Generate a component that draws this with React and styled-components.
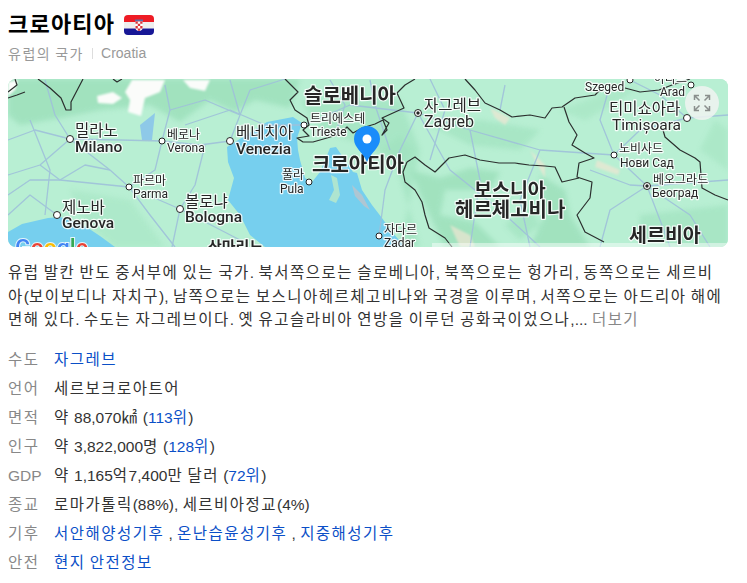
import React from "react";
import styled, { createGlobalStyle } from "styled-components";

const Global = createGlobalStyle`
  html, body { margin: 0; padding: 0; background: #fff; }
  body { font-family: "Liberation Sans", "Noto Sans CJK KR", sans-serif; }
`;

const Page = styled.main`
  width: 720px;
  padding: 11px 0 0 8px;
`;
const TitleRow = styled.div`
  display: flex;
  align-items: center;
  gap: 9px;
  height: 28px;
`;
const Title = styled.h1`
  margin: 0;
  font-size: 22px;
  line-height: 28px;
  font-weight: 700;
  letter-spacing: 1.2px;
  color: #000;
`;
const Ko = styled.span`
  letter-spacing: 0.095em;
`;
const Sub = styled.div`
  display: flex;
  align-items: center;
  height: 20px;
  margin-top: 4px;
  font-size: 14px;
  color: #999;
  ${Ko} {
    letter-spacing: 1.55px;
  }
`;
const Sep = styled.span`
  width: 1px;
  height: 11px;
  margin: 0 8px;
  background: #ddd;
`;
const MapFrame = styled.div`
  position: relative;
  width: 720px;
  height: 168px;
  margin-top: 16px;
  border-radius: 8px;
  overflow: hidden;
  background: #b6edd0;
`;
const MapSvg = styled.svg`
  display: block;
  width: 720px;
  height: 168px;
  filter: blur(0.4px);
`;
const MapLabel = styled.text`
  font-family: Roboto, "Noto Sans CJK KR", sans-serif;
  font-size: ${(p) => p.$size}px;
  font-weight: ${(p) => p.$weight};
  fill: #262626;
  stroke: rgba(255, 255, 255, 0.85);
  stroke-width: 2.4px;
  paint-order: stroke;
  stroke-linejoin: round;
`;
const GoogleMark = styled.text`
  font-family: Roboto, sans-serif;
  font-size: 23px;
  font-weight: 500;
  stroke: rgba(255, 255, 255, 0.8);
  stroke-width: 2px;
  paint-order: stroke;
`;
const ExpandButton = styled.button`
  position: absolute;
  top: 7px;
  right: 9px;
  width: 34px;
  height: 34px;
  padding: 0;
  border: 0;
  border-radius: 50%;
  display: flex;
  align-items: center;
  justify-content: center;
  background: rgba(240, 243, 241, 0.85);
`;
const Description = styled.p`
  margin: 14px 0 0;
  font-size: 15.5px;
  line-height: 23.5px;
  color: #333;
  word-break: break-all;
`;
const More = styled.span`
  color: #888;
`;
const InfoList = styled.dl`
  margin: 13px 0 0;
  display: grid;
  grid-template-columns: 46px 1fr;
  grid-auto-rows: 29px;
  font-size: 15.5px;
  line-height: 29px;
`;
const Term = styled.dt`
  color: #888;
`;
const Value = styled.dd`
  margin: 0;
  color: #333;
`;
const Link = styled.a`
  color: #0b4fc7;
  text-decoration: none;
`;

const T = ({ children }) =>
  String(children)
    .split(/([\uAC00-\uD7A3\u33A2]+)/)
    .map((part, i) => (i % 2 ? <Ko key={i}>{part}</Ko> : part));

const Flag = () => (
  <svg width="30" height="20" viewBox="0 0 30 20">
    <defs>
      <clipPath id="flagclip"><rect width="30" height="20" rx="4" /></clipPath>
    </defs>
    <g clipPath="url(#flagclip)">
      <rect width="30" height="7" fill="#ee1c25" />
      <rect y="7" width="30" height="6.5" fill="#eeeeee" />
      <rect y="13.5" width="30" height="6.5" fill="#171796" />
      <path d="M11 4.5h8v2h-8z" fill="#5a6fa8" />
      <path d="M11.5 6.5h7v6.5q0 2.5-3.500 3q-3.500-.5-3.500-3z" fill="#fff" />
      <path d="M11.500 6.500h2.300v2.300h-2.300zM16.200 6.500h2.300v2.300h-2.300zM13.800 8.800h2.400v2.300h-2.400zM11.500 11.100h2.300v2.300h-2.300zM16.200 11.100h2.300v2.300h-2.300zM13.800 13.400h2.400v2.300h-2.400z" fill="#d9343c" />
    </g>
  </svg>
);

const poly = (pts) => "M" + pts.map((p) => p.join(" ")).join("L");

const BORDERS = [
  [[8,92],[17,85],[15,79]],
  [[8,98],[17,95],[25,92]],
  [[38,79],[50,88],[61,98],[66,110],[71,110],[71,102],[83,79]],
  [[113,79],[117,82],[122,79]],
  [[285,79],[298,92],[290,100],[295,110],[307,118],[309,125],[303,130],[309,136],[297,138],[303,142],[313,142],[327,138],[340,134],[347,127],[353,133],[362,128],[375,124],[383,120],[387,130],[382,135],[389,123],[382,118],[404,108],[397,93],[405,85],[415,79]],
  [[465,79],[475,90],[485,103],[500,110],[512,117],[530,115],[545,118],[552,108],[562,107],[575,98],[595,95],[600,90]],
  [[564,107],[569,122],[577,135],[572,145],[585,153],[594,158],[579,163],[577,177],[592,182],[590,198],[577,215],[585,232],[604,242]],
  [[407,162],[403,172],[405,182],[415,190],[422,202],[425,215],[429,228],[445,238],[452,247]],
  [[407,162],[415,157],[425,165],[435,172],[442,165],[449,158],[465,155],[480,160],[499,163],[515,163],[529,165],[545,166],[555,167],[562,182],[579,178]],
  [[625,88],[640,92],[659,90],[672,85],[690,79]],
  [[663,130],[665,137],[680,150],[695,158],[700,162],[702,188],[715,195],[728,200]],
];

const ROADS = [
  [[8,140],[35,130],[70,139],[120,140],[162,141],[200,145],[230,141]],
  [[8,175],[40,165],[70,139],[55,115],[45,80]],
  [[40,165],[60,180],[129,187],[180,209],[240,240]],
  [[30,120],[50,170],[45,215]],
  [[70,139],[110,170],[129,187],[150,215],[175,247]],
  [[8,195],[30,180],[60,180],[85,165],[110,170]],
  [[162,141],[155,170],[129,187]],
  [[205,145],[195,185],[180,209],[172,247]],
  [[165,85],[170,110],[162,141]],
  [[230,141],[240,115],[230,80]],
  [[185,125],[230,110],[265,125],[304,125]],
  [[240,115],[250,90],[285,79]],
  [[170,110],[205,100],[240,115]],
  [[304,125],[350,105],[418,113],[470,130],[540,150],[614,155],[647,186],[728,180]],
  [[330,80],[345,105],[335,135]],
  [[370,80],[375,105],[390,150]],
  [[418,113],[400,150],[385,190],[379,236]],
  [[418,113],[450,170],[500,210],[540,247]],
  [[470,130],[480,180],[470,247]],
  [[540,150],[520,200],[530,247]],
  [[614,155],[600,120],[610,85]],
  [[614,155],[640,130],[687,118],[728,115]],
  [[647,186],[660,220],[670,247]],
  [[647,186],[610,210],[600,247]],
  [[647,186],[690,215],[710,247]],
  [[687,118],[660,95],[630,80]],
  [[430,79],[445,110],[430,160]],
  [[500,110],[505,85]],
  [[8,215],[30,195],[57,215]],
  [[590,170],[630,185],[647,186]],
];

const LABELS = [
  ["슬로베니아", 304, 103, 20, 700],
  ["크로아티아", 312, 172, 20, 700],
  ["트리에스테", 310, 123, 12, 400],
  ["Trieste", 310, 136, 12, 400],
  ["밀라노", 75, 136, 15.5, 400],
  ["Milano", 75, 152, 15.5, 500],
  ["베로나", 167, 139, 12, 400],
  ["Verona", 167, 152, 12, 400],
  ["베네치아", 236, 138, 15.5, 400],
  ["Venezia", 236, 154, 15.5, 500],
  ["파르마", 133, 185, 12, 400],
  ["Parma", 133, 198, 12, 400],
  ["볼로냐", 185, 207, 15.5, 400],
  ["Bologna", 185, 222, 15.5, 500],
  ["제노바", 62, 213, 15.5, 400],
  ["Genova", 62, 228, 15.5, 500],
  ["풀라", 282, 179, 12, 400],
  ["Pula", 280, 193, 12, 400],
  ["산마리노", 208, 252, 15, 700],
  ["자그레브", 424, 111, 15.5, 400],
  ["Zagreb", 424, 127, 16, 400],
  ["자다르", 384, 234, 12, 400],
  ["Zadar", 384, 247, 12, 400],
  ["아라드", 654, 83, 12, 400],
  ["Szeged", 585, 91, 12, 400],
  ["Arad", 660, 96, 12, 400],
  ["티미쇼아라", 609, 114, 15.5, 400],
  ["Timișoara", 612, 130, 15.5, 400],
  ["노비사드", 619, 153, 12, 400],
  ["Нови Сад", 620, 167, 12, 400],
  ["베오그라드", 653, 184, 12, 400],
  ["Београд", 652, 197, 12, 400],
  ["보스니아", 474, 197, 19.5, 700],
  ["헤르체고비나", 455, 217, 20, 700],
  ["세르비아", 629, 242, 19.5, 700],
];

const DOTS = [
  [70,139,3.5],[162,141,3],[230,141,3.5],[129,187,3],[180,209,3.5],[57,215,3.5],
  [309,182,3],[304,125,3],[379,236,3],[630,80,3],[691,85,3],[687,118,3.5],[614,155,3],
];
const CAPITALS = [[418,113],[647,186]];

const MapArt = () => (
  <MapSvg viewBox="8 79 720 168" aria-label="크로아티아 지도">
    <defs>
      <filter id="soft" x="-10%" y="-10%" width="120%" height="120%"><feGaussianBlur stdDeviation="2.5" /></filter>
      <filter id="soft1" x="-10%" y="-10%" width="120%" height="120%"><feGaussianBlur stdDeviation="0.8" /></filter>
    </defs>
    <rect x="8" y="79" width="720" height="168" fill="#b8efd3" />
    <g filter="url(#soft)" fill="#9bdfba" opacity=".8">
      <path d="M8 79H300L290 108L255 100L235 112L210 100L180 122L150 105L100 110L60 118L20 125L8 115Z" />
      <path d="M300 100L400 100L420 150L400 247L420 247L395 160L350 140L320 130Z" opacity=".7" />
      <path d="M410 170L440 178L470 168L500 172L490 190L445 190L440 215L475 222L500 247H445L425 205Z" />
      <path d="M540 175L565 190L570 215L590 247H530L545 215Z" />
      <path d="M505 225L530 205L540 225L520 240Z" opacity=".7" />
      <path d="M430 125L480 120L540 130L520 150L470 145Z" opacity=".7" />
      <path d="M380 150L400 135L415 150L400 170Z" opacity=".6" />
      <path d="M640 215L728 205V247H640Z" opacity=".7" />
      <path d="M715 120L728 130V170L700 150Z" opacity=".5" />
      <path d="M70 190L130 200L165 247H115L85 222Z" opacity=".45" />
      <path d="M560 110L600 95L640 85L620 100L585 120Z" opacity=".5" />
    </g>
    <g filter="url(#soft1)" fill="#fbfcfa">
      <path d="M97 96L113 92L122 98L113 104L98 103Z" />
      <path d="M125 92L132 80H165L160 92L145 98L141 116L128 112L130 100Z" />
      <path d="M183 80H210L205 91L190 88Z" />
      <path d="M8 82L18 80L15 90L8 96Z" />
      <path d="M490 108L510 118L505 125L495 118Z" opacity=".7" fill="#f0e6d2" />
      <path d="M530 150L545 165L545 178L535 160Z" opacity=".7" fill="#f0e6d2" />
      <path d="M597 160L620 170L618 175L595 167Z" opacity=".7" fill="#f0e6d2" />
      <path d="M450 225L470 235L475 247H460Z" opacity=".7" fill="#f0e6d2" />
    </g>
    <path fill="#76cfee" d="M8 247V232L22 224L35 221L48 218L60 217L75 222L88 228L100 236L115 247Z" />
    <path fill="#76cfee" d="M227 147L267 122L293 117L302 123L297 138L298 150L300 160L305 178L312 182L320 172L326 158L330 148L336 147L345 160L353 172L357 173L362 190L372 205L382 218L392 232L405 247H265L250 235L240 215L228 200L234 178L228 162Z" />
    <path fill="#aee5d0" d="M331 175L337 178L340 195L336 203L329 200L334 190Z" />
    <path fill="#afc6d2" d="M352 185L362 195L370 210L364 206L355 196Z" />
    <path fill="#8ec9e8" d="M140 125L155 113L152 140L142 140Z" />
    <g fill="none" stroke="#9fc0da" strokeWidth="1.300" opacity=".9" strokeLinejoin="round">
      {ROADS.map((r, i) => <path key={i} d={poly(r)} />)}
    </g>
    <g fill="none" stroke="#2b2f2e" strokeWidth="1.200" strokeLinejoin="round">
      {BORDERS.map((r, i) => <path key={i} d={poly(r)} />)}
    </g>
    <rect x="432" y="243" width="296" height="4" fill="#fff" opacity=".45" />
    {LABELS.map(([t, x, y, s, w]) => (
      <MapLabel key={t} x={x} y={y} $size={s} $weight={w}>{t}</MapLabel>
    ))}
    {DOTS.map(([x, y, r], i) => (
      <circle key={i} cx={x} cy={y} r={r} fill="#fff" stroke="#222" strokeWidth="1" />
    ))}
    {CAPITALS.map(([x, y], i) => (
      <g key={i}>
        <circle cx={x} cy={y} r="3.500" fill="#fff" stroke="#222" strokeWidth="1" />
        <circle cx={x} cy={y} r="1.700" fill="#222" />
      </g>
    ))}
    <GoogleMark x="15" y="256">
      <tspan fill="#4285f4">G</tspan><tspan fill="#ea4335">o</tspan><tspan fill="#fbbc05">o</tspan><tspan fill="#4285f4">g</tspan><tspan fill="#34a853">l</tspan><tspan fill="#ea4335">e</tspan>
    </GoogleMark>
    <path fill="#1a8cfa" d="M367 162C363 152 354 148 354 139a13 13 0 0 1 26 0C380 148 371 152 367 162Z" />
    <circle cx="367" cy="139" r="4.500" fill="#fff" />
  </MapSvg>
);

const ExpandIcon = () => (
  <svg width="18" height="18" viewBox="0 0 18 18" fill="none" stroke="#8a8f8d" strokeWidth="1.500">
    <path d="M1.500 6V1.500H6M1.500 1.500L6.500 6.500" />
    <path d="M12 1.500h4.500V6M16.500 1.500L11.500 6.500" />
    <path d="M1.500 12v4.500H6M1.500 16.500L6.500 11.500" />
    <path d="M12 16.500h4.500V12M16.500 16.500L11.500 11.500" />
  </svg>
);

export default function App() {
  return (
    <Page>
      <Global />
      <TitleRow>
        <Title>크로아티아</Title>
        <Flag />
      </TitleRow>
      <Sub><span><T>유럽의 국가</T></span><Sep />Croatia</Sub>
      <MapFrame>
        <MapArt />
        <ExpandButton aria-label="지도 크게 보기"><ExpandIcon /></ExpandButton>
      </MapFrame>
      <Description>
        <T>유럽 발칸 반도 중서부에 있는 국가. 북서쪽으로는 슬로베니아, 북쪽으로는 헝가리, 동쪽으로는 세르비아(보이보디나 자치구), 남쪽으로는 보스니아헤르체고비나와 국경을 이루며, 서쪽으로는 아드리아 해에 면해 있다. 수도는 자그레브이다. 옛 유고슬라비아 연방을 이루던 공화국이었으나,... </T>
        <More><T>더보기</T></More>
      </Description>
      <InfoList>
        <Term><T>수도</T></Term>
        <Value><Link><T>자그레브</T></Link></Value>
        <Term><T>언어</T></Term>
        <Value><T>세르보크로아트어</T></Value>
        <Term><T>면적</T></Term>
        <Value><T>약 88,070㎢ (</T><Link><T>113위</T></Link>)</Value>
        <Term><T>인구</T></Term>
        <Value><T>약 3,822,000명 (</T><Link><T>128위</T></Link>)</Value>
        <Term>GDP</Term>
        <Value><T>약 1,165억7,400만 달러 (</T><Link><T>72위</T></Link>)</Value>
        <Term><T>종교</T></Term>
        <Value><T>로마가톨릭(88%), 세르비아정교(4%)</T></Value>
        <Term><T>기후</T></Term>
        <Value><Link><T>서안해양성기후</T></Link> , <Link><T>온난습윤성기후</T></Link> , <Link><T>지중해성기후</T></Link></Value>
        <Term><T>안전</T></Term>
        <Value><Link><T>현지 안전정보</T></Link></Value>
      </InfoList>
    </Page>
  );
}
